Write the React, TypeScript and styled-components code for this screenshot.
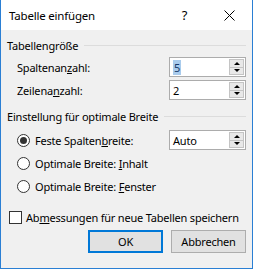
import React from "react";
import styled, { createGlobalStyle } from "styled-components";

const GlobalStyle = createGlobalStyle`
  html, body {
    margin: 0;
    padding: 0;
    background: #ffffff;
  }
  * {
    box-sizing: border-box;
  }
`;

const Window = styled.div`
  width: 253px;
  height: 269px;
  border: 1px solid #2a7fd4;
  border-top: none;
  display: flex;
  flex-direction: column;
  font-family: "Noto Sans", "Open Sans", sans-serif;
  font-size: 11px;
  letter-spacing: -0.2px;
  white-space: nowrap;
  color: #000;
`;

const TitleBar = styled.div`
  height: 30px;
  background: #ffffff;
  display: flex;
  align-items: center;
  padding-left: 8px;
`;

const Title = styled.div`
  flex: 1;
  font-size: 11.5px;
`;

const TitleButton = styled.div`
  width: 45px;
  height: 30px;
  display: flex;
  align-items: center;
  justify-content: center;
  font-size: 13px;
`;

const Body = styled.div`
  flex: 1;
  background: #f0f0f0;
  padding: 7px 6px 0 6px;
  display: flex;
  flex-direction: column;
`;

const GroupHeader = styled.div<{ $gap?: number }>`
  display: flex;
  align-items: center;
  height: 16px;
  margin-top: ${({ $gap }) => $gap ?? 0}px;
  margin-bottom: ${({ $gap }) => ($gap ? 6 : 4)}px;

  &::after {
    content: "";
    flex: 1;
    margin-left: 6px;
    border-top: 1px solid #dcdcdc;
  }
`;

const FieldRow = styled.div`
  display: flex;
  align-items: center;
  justify-content: space-between;
  height: 20px;
  margin-bottom: 3px;
  padding-left: 10px;
`;

const SpinBox = styled.div`
  width: 77px;
  height: 20px;
  background: #fff;
  border: 1px solid #acacac;
  display: flex;
  align-items: center;
  padding: 0 1px 0 3px;
`;

const SpinValue = styled.span`
  flex: 1;
  display: flex;
`;

const Selected = styled.span`
  background: #a9cbec;
  color: #173a6a;
  padding: 0 1px;
`;

const Arrows = styled.div`
  width: 15px;
  height: 16px;
  display: flex;
  flex-direction: column;
`;

const Arrow = styled.div<{ $down?: boolean }>`
  flex: 1;
  background: #e8e8e8;
  border: 1px solid #c4c4c4;
  ${({ $down }) => ($down ? "border-top: none;" : "")}
  display: flex;
  align-items: center;
  justify-content: center;

  &::before {
    content: "";
    border-left: 3px solid transparent;
    border-right: 3px solid transparent;
    ${({ $down }) =>
      $down ? "border-top: 3px solid #000;" : "border-bottom: 3px solid #000;"}
  }
`;

const RadioRow = styled.div`
  display: flex;
  align-items: center;
  height: 20px;
  margin-bottom: 3px;
  padding-left: 10px;
  gap: 5px;
`;

const RadioCircle = styled.span<{ $checked?: boolean }>`
  width: 13px;
  height: 13px;
  border-radius: 50%;
  border: 1px solid #333;
  background: #fff;
  display: flex;
  align-items: center;
  justify-content: center;

  &::after {
    content: "";
    width: 7px;
    height: 7px;
    border-radius: 50%;
    background: ${({ $checked }) => ($checked ? "#333" : "transparent")};
  }
`;

const Label = styled.span`
  flex: 1;
`;

const CheckRow = styled.div`
  display: flex;
  align-items: center;
  height: 16px;
  gap: 4px;
  margin-top: 10px;
  padding-left: 2px;
`;

const CheckBox = styled.span`
  width: 13px;
  height: 13px;
  border: 1px solid #333;
  background: #fff;
`;

const ButtonRow = styled.div`
  display: flex;
  justify-content: flex-end;
  gap: 8px;
  margin-top: 5px;
`;

const Button = styled.div<{ $default?: boolean }>`
  width: 75px;
  height: 23px;
  background: #e1e1e1;
  border: ${({ $default }) => ($default ? "2px solid #0078d7" : "1px solid #adadad")};
  display: flex;
  align-items: center;
  justify-content: center;
`;

const U = styled.span`
  text-decoration: underline;
`;

const Spin: React.FC<{ children: React.ReactNode }> = ({ children }) => (
  <SpinBox>
    <SpinValue>{children}</SpinValue>
    <Arrows>
      <Arrow />
      <Arrow $down />
    </Arrows>
  </SpinBox>
);

const App: React.FC = () => (
  <>
    <GlobalStyle />
    <Window>
      <TitleBar>
        <Title>Tabelle einfügen</Title>
        <TitleButton>?</TitleButton>
        <TitleButton>
          <svg width="11" height="11" viewBox="0 0 11 11">
            <path d="M0.5 0.5 L10.5 10.5 M10.5 0.5 L0.5 10.5" stroke="#000" strokeWidth="1" />
          </svg>
        </TitleButton>
      </TitleBar>
      <Body>
        <GroupHeader>Tabellengröße</GroupHeader>
        <FieldRow>
          <Label>
            Spaltenan<U>z</U>ahl:
          </Label>
          <Spin>
            <Selected>5</Selected>
          </Spin>
        </FieldRow>
        <FieldRow>
          <Label>
            Zeilena<U>n</U>zahl:
          </Label>
          <Spin>2</Spin>
        </FieldRow>
        <GroupHeader $gap={5}>Einstellung für optimale Breite</GroupHeader>
        <RadioRow>
          <RadioCircle $checked />
          <Label>
            Feste Spalten<U>b</U>reite:
          </Label>
          <Spin>Auto</Spin>
        </RadioRow>
        <RadioRow>
          <RadioCircle />
          <Label>
            Optimale Breite: <U>I</U>nhalt
          </Label>
        </RadioRow>
        <RadioRow>
          <RadioCircle />
          <Label>
            Optimale Breite: <U>F</U>enster
          </Label>
        </RadioRow>
        <CheckRow>
          <CheckBox />
          <Label>
            Ab<U>m</U>essungen für neue Tabellen speichern
          </Label>
        </CheckRow>
        <ButtonRow>
          <Button $default>OK</Button>
          <Button>Abbrechen</Button>
        </ButtonRow>
      </Body>
    </Window>
  </>
);

export default App;
